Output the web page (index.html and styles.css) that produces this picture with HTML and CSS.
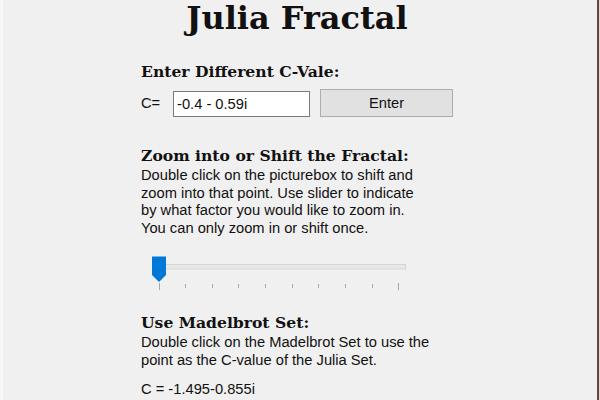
FILE: index.html
```html
<!DOCTYPE html>
<html>
<head>
<meta charset="utf-8">
<link rel="stylesheet" href="styles.css">
</head>
<body>
<div class="window">
  <div class="column">
    <h1 class="title">Julia Fractal</h1>

    <h2 class="heading h-enter">Enter Different C-Vale:</h2>
    <div class="input-row">
      <span class="label">C=</span>
      <div class="textbox">-0.4 - 0.59i</div>
      <div class="button">Enter</div>
    </div>

    <h2 class="heading h-zoom">Zoom into or Shift the Fractal:</h2>
    <p class="para">Double click on the picturebox to shift and<br>zoom into that point. Use slider to indicate<br>by what factor you would like to zoom in.<br>You can only zoom in or shift once.</p>

    <div class="slider">
      <svg width="258" height="36" viewBox="0 0 258 36">
        <rect x="8.5" y="9.5" width="247" height="4.5" fill="#e7e9e9" stroke="#d4d6d6" stroke-width="1"/>
        <path d="M2 1.5 H16 V20 L9 27 L2 20 Z" fill="#0078d7"/>
        <g stroke="#a8a8a8" stroke-width="1">
          <line x1="9.5" y1="28" x2="9.5" y2="35"/>
          <line x1="35.5" y1="29" x2="35.5" y2="33"/>
          <line x1="62.5" y1="29" x2="62.5" y2="33"/>
          <line x1="88.5" y1="29" x2="88.5" y2="33"/>
          <line x1="115.5" y1="29" x2="115.5" y2="33"/>
          <line x1="142.5" y1="29" x2="142.5" y2="33"/>
          <line x1="168.5" y1="29" x2="168.5" y2="33"/>
          <line x1="195.5" y1="29" x2="195.5" y2="33"/>
          <line x1="222.5" y1="29" x2="222.5" y2="33"/>
          <line x1="248.5" y1="28" x2="248.5" y2="35"/>
        </g>
      </svg>
    </div>

    <h2 class="heading h-mandel">Use Madelbrot Set:</h2>
    <p class="para">Double click on the Madelbrot Set to use the<br>point as the C-value of the Julia Set.</p>
    <p class="cvalue">C = -1.495-0.855i</p>
  </div>
</div>
</body>
</html>
```

FILE: styles.css
```css
html, body {
  margin: 0;
  padding: 0;
  background: #f0f0f0;
}

.window {
  width: 600px;
  height: 400px;
  box-sizing: border-box;
  overflow: hidden;
  background: #f0f0f0;
  box-shadow: inset 3px 0 #f8f8f8, inset -1px 0 #d9d9d9, inset -3px 0 #6b4538;
  padding-left: 141px;
}

.column {
  width: 312px;
  display: flex;
  flex-direction: column;
  color: #111;
  font-family: "Liberation Sans", Arial, sans-serif;
  font-size: 14.7px;
}

.title {
  margin: 0;
  font-family: "DejaVu Serif", serif;
  font-weight: bold;
  font-size: 32px;
  line-height: 37px;
  text-align: center;
  white-space: nowrap;
}

.heading {
  margin: 0;
  font-family: "DejaVu Serif", serif;
  font-weight: bold;
  font-size: 15.6px;
  line-height: 18px;
  white-space: nowrap;
}

.h-enter { margin-top: 26px; }
.h-zoom { margin-top: 30px; }
.h-mandel { margin-top: 23px; }

.input-row {
  margin-top: 8px;
  display: flex;
  align-items: center;
  height: 28px;
}

.label {
  width: 32px;
}

.textbox {
  box-sizing: border-box;
  width: 137px;
  height: 26px;
  margin-top: 1px;
  background: #fff;
  border: 1px solid #7a7a7a;
  padding-left: 3px;
  line-height: 24px;
  white-space: nowrap;
}

.button {
  box-sizing: border-box;
  margin-left: 10px;
  width: 133px;
  height: 28px;
  background: #e1e1e1;
  border: 1px solid #adadad;
  text-align: center;
  line-height: 26px;
}

.para {
  margin: 2px 0 0 0;
  line-height: 17.6px;
  white-space: nowrap;
}

.slider {
  margin-top: 18px;
  margin-left: 9px;
  height: 36px;
  line-height: 0;
}

.cvalue {
  margin: 11px 0 0 0;
  line-height: 17.7px;
}
```
